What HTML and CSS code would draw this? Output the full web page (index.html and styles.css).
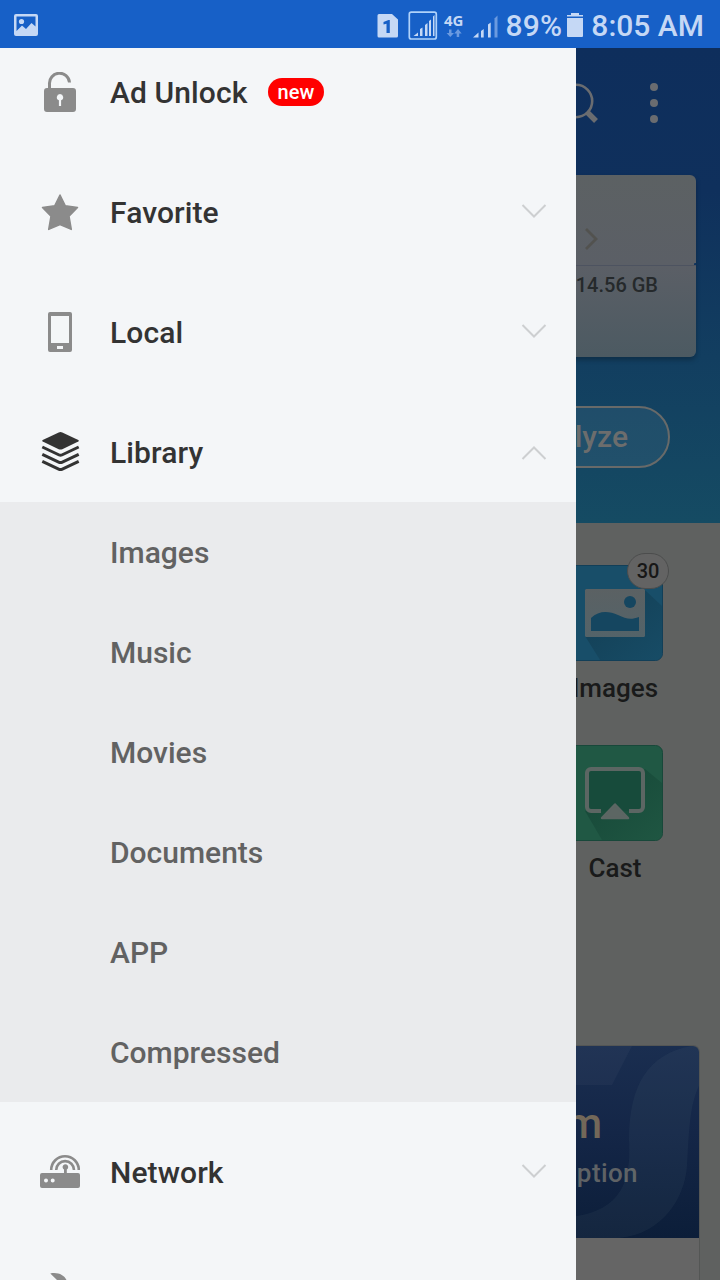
FILE: index.html
```html
<!DOCTYPE html>
<html lang="en">
<head>
    <meta charset="UTF-8">
    <meta name="viewport" content="width=device-width, initial-scale=1.0">
    <title>File Manager</title>
    <link rel="stylesheet" href="styles.css">
</head>
<body>
    <header class="status-bar">
        <svg class="status-photo" width="24" height="22" viewBox="0 0 24 22">
            <path fill-rule="evenodd" d="M2 0h20a2 2 0 0 1 2 2v18a2 2 0 0 1-2 2H2a2 2 0 0 1-2-2V2a2 2 0 0 1 2-2zM2.500 2.500V17L8 11.500l4 3.500 5.500-6 4 3.500V2.500z"/>
            <circle cx="7.500" cy="7.500" r="2.600"/>
        </svg>
        <svg class="status-icons" width="121" height="32" viewBox="0 0 121 32">
            <!-- sim card -->
            <path fill-rule="evenodd" d="M2 4h13l6 5.500V26a1.500 1.500 0 0 1-1.500 1.500H2A1.500 1.500 0 0 1 .5 26V5.500A1.500 1.500 0 0 1 2 4zM6.500 12v2.600l3-.8V23h3.300V10h-1.300z"/>
            <!-- boxed signal -->
            <rect x="32.300" y="2.200" width="27" height="26.800" rx="2" fill="none" stroke="#b0d2fa" stroke-width="1.700"/>
            <path d="M36.500 26l4.500-3.500V26zM43 19l2.500-1.500V26H43zM48 15l2.500-2v13H48zM52 11l2-1.500V26h-2zM56 6.500L57.500 5v21H56z"/>
            <text class="net-type" x="67" y="15.500">4G</text>
            <path class="dim" d="M72 19.500h2.500V23H77l-3.700 4-3.700-4H72zM79.700 27h2.500v-3.500h2.500L81 19l-3.700 4.500h2.400z"/>
            <!-- signal -->
            <path d="M96 27.500l5.500-5v5zM104 21l2.700-2v8.500H104zM111 14.500l2.700-2v15H111z"/>
            <path class="dim" d="M117.500 8.500l3-3v22h-3z"/>
        </svg>
        <span class="battery-level">89%</span>
        <svg class="battery" width="16" height="24" viewBox="0 0 16 24">
            <path d="M4 0h8v2h4v1.500H0V2h4zM0 5h16v18a1 1 0 0 1-1 1H1a1 1 0 0 1-1-1z"/>
        </svg>
        <span class="clock">8:05 AM</span>
    </header>

    <div class="screen">
        <main class="home">
            <section class="storage">
                <div class="toolbar">
                    <svg width="44" height="44" viewBox="0 0 44 44">
                        <circle cx="20" cy="20" r="16.200" fill="none" stroke="#6a6c70" stroke-width="2.600"/>
                        <path d="M31 31l9 9" stroke="#6a6c70" stroke-width="5.500"/>
                    </svg>
                    <svg width="8" height="40" viewBox="0 0 8 40">
                        <g fill="#6a6c70"><circle cx="4" cy="4" r="4"/><circle cx="4" cy="20" r="4"/><circle cx="4" cy="36" r="4"/></g>
                    </svg>
                </div>
                <div class="storage-card">
                    <div class="storage-top">
                        <svg width="14" height="24" viewBox="0 0 14 24"><path d="M2 2l10 10L2 22" fill="none" stroke="#52524f" stroke-width="2.800"/></svg>
                    </div>
                    <div class="storage-bottom">14.56 GB</div>
                </div>
                <div class="analyze">Analyze</div>
            </section>

            <section class="tiles">
                <div class="tile">
                    <div class="tile-icon">
                        <svg width="96" height="96" viewBox="0 0 96 96">
                            <defs>
                                <linearGradient id="frame" x1="0" y1="0" x2="0" y2="1"><stop offset="0" stop-color="#5b6163"/><stop offset="1" stop-color="#536369"/></linearGradient>
                                <linearGradient id="blue-shade" x1="0" y1="0" x2="1" y2="1"><stop offset=".3" stop-color="#144259"/><stop offset="1" stop-color="#174c66"/></linearGradient>
                                <linearGradient id="green-shade" x1="0" y1="0" x2="1" y2="1"><stop offset=".3" stop-color="#184b3a"/><stop offset="1" stop-color="#1f5642"/></linearGradient>
                            </defs>
                            <rect x=".5" y=".5" width="95" height="95" rx="7" fill="#184e69" stroke="#123f58"/>
                            <path d="M18 71L78 25l17 16v47a7 7 0 0 1-7 7H33z" fill="url(#blue-shade)"/>
                            <rect x="18" y="24" width="60" height="48" rx="1.500" fill="url(#frame)"/>
                            <path d="M24 53c8-8 18-7 27-3 8 4 13 5 21 2v14H24z" fill="#154660"/>
                            <circle cx="63" cy="37" r="6" fill="#154660"/>
                        </svg>
                        <span class="count">30</span>
                    </div>
                    <div class="tile-label">Images</div>
                </div>
                <div class="tile">
                    <div class="tile-icon">
                        <svg width="96" height="96" viewBox="0 0 96 96">
                            <rect x=".5" y=".5" width="95" height="95" rx="7" fill="#205844" stroke="#18483a"/>
                            <path d="M18 66L78 24l17 14v50a7 7 0 0 1-7 7H35z" fill="url(#green-shade)"/>
                            <rect x="20" y="24" width="56" height="42" rx="3" fill="#174b3b"/>
                            <path d="M34 66H24a4 4 0 0 1-4-4V28a4 4 0 0 1 4-4h48a4 4 0 0 1 4 4v34a4 4 0 0 1-4 4H62" fill="none" stroke="#5c6663" stroke-width="4"/>
                            <path d="M48 59.500L61 73H35z" fill="#5c6663" stroke="#5c6663" stroke-width="2.500" stroke-linejoin="round"/>
                        </svg>
                    </div>
                    <div class="tile-label">Cast</div>
                </div>
            </section>

            <section class="promo">
                <div class="promo-banner">
                    <svg class="promo-art" width="180" height="192" viewBox="0 0 180 192">
                        <path d="M0 0h113L93 39H0z" fill="#fff" opacity=".03"/>
                        <path d="M180 0h-8C130 8 110 38 110 94c2 36-4 72-60 77l-50 1v20h100c45-4 66-42 68-72 2-30 2-60 12-80z" fill="#7a9a9a" opacity=".07"/>
                    </svg>
                    <div class="promo-title">Premium</div>
                    <div class="promo-text">Subscription</div>
                </div>
            </section>
        </main>

        <nav class="drawer">
            <div class="menu-item">
                <svg class="menu-icon" viewBox="0 0 40 40">
                    <path d="M9.500 17v-5a10 10 0 0 1 20-1.500" fill="none" stroke="#8b8b8b" stroke-width="3"/>
                    <path fill-rule="evenodd" d="M7 16h26a3 3 0 0 1 3 3v18a3 3 0 0 1-3 3H7a3 3 0 0 1-3-3V19a3 3 0 0 1 3-3zM20 22a3.200 3.200 0 0 0-1.100 6.200V34h2.200v-5.800A3.200 3.200 0 0 0 20 22z"/>
                </svg>
                <span class="menu-label">Ad Unlock</span>
                <span class="new-badge">new</span>
            </div>
            <div class="menu-item">
                <svg class="menu-icon" viewBox="0 0 40 40">
                    <path d="M20 3l5.300 10.800L37.500 15.500l-8.500 8.700L31.300 37.400 20 32.500 8.700 37.400 11 24.200 2.500 15.500l12.200-1.700z" stroke="#8b8b8b" stroke-width="1.500" stroke-linejoin="round"/>
                </svg>
                <span class="menu-label">Favorite</span>
                <svg class="arrow" viewBox="0 0 26 14"><path d="M1.500 1L13 12.500 24.500 1"/></svg>
            </div>
            <div class="menu-item">
                <svg class="menu-icon" viewBox="0 0 40 40">
                    <path fill-rule="evenodd" d="M10 0h20a2 2 0 0 1 2 2v36a2 2 0 0 1-2 2H10a2 2 0 0 1-2-2V2a2 2 0 0 1 2-2zM11 4v27h18V4zM17 34v3h6v-3z"/>
                </svg>
                <span class="menu-label">Local</span>
                <svg class="arrow" viewBox="0 0 26 14"><path d="M1.500 1L13 12.500 24.500 1"/></svg>
            </div>
            <div class="menu-item">
                <svg class="menu-icon dark" viewBox="0 0 40 40">
                    <path d="M18.700.5q1.800-.8 3.600 0l16 7.500q1 .8 0 1.600l-16 7.600q-1.800.8-3.600 0L2.700 9.600q-1-.8 0-1.600z"/>
                    <path d="M2.300 15l16.900 8q1.300.6 2.600 0l16.900-8M2.300 22.300l16.900 8q1.300.6 2.600 0l16.900-8M2.300 29.300l16.900 8q1.300.6 2.600 0l16.900-8" fill="none" stroke="#333" stroke-width="3"/>
                </svg>
                <span class="menu-label">Library</span>
                <svg class="arrow arrow-up" viewBox="0 0 26 14"><path d="M1.500 13L13 1.500 24.500 13"/></svg>
            </div>
            <div class="submenu">
                <div class="submenu-item">Images</div>
                <div class="submenu-item">Music</div>
                <div class="submenu-item">Movies</div>
                <div class="submenu-item">Documents</div>
                <div class="submenu-item">APP</div>
                <div class="submenu-item">Compressed</div>
            </div>
            <div class="menu-item">
                <svg class="menu-icon" viewBox="0 0 40 40">
                    <path fill-rule="evenodd" d="M2 21h36a2 2 0 0 1 2 2v11a2 2 0 0 1-2 2H2a2 2 0 0 1-2-2V23a2 2 0 0 1 2-2zM6 26.500a2 2 0 1 0 0 4 2 2 0 0 0 0-4zM12.700 26.500a2 2 0 1 0 0 4 2 2 0 0 0 0-4z"/>
                    <path d="M11.200 18a13.800 13.800 0 0 1 27.600 0M16.200 18a8.900 8.900 0 0 1 17.800 0" fill="none" stroke="#8b8b8b" stroke-width="2.600"/>
                    <path d="M24 21v-3.500a2.800 2.800 0 1 1 2.800 0V21z"/>
                </svg>
                <span class="menu-label">Network</span>
                <svg class="arrow" viewBox="0 0 26 14"><path d="M1.500 1L13 12.500 24.500 1"/></svg>
            </div>
            <div class="menu-item">
                <svg class="menu-icon" viewBox="0 0 40 40">
                    <path d="M10.300 1.500C18 0 24 3 26.500 8v6H17V8z"/>
                </svg>
            </div>
        </nav>
    </div>
</body>
</html>
```
FILE: styles.css
```css
* {
    box-sizing: border-box;
}

body {
    margin: 0;
    height: 1280px;
    overflow: hidden;
    font-family: Roboto, sans-serif;
    font-weight: 500;
    background-color: #5f6160;
}

svg {
    display: block;
    flex-shrink: 0;
}

/* Status bar */
.status-bar {
    display: flex;
    align-items: center;
    height: 48px;
    padding: 2px 16px 0 14px;
    background-color: #1760c7;
    color: #c5d8f5;
    fill: #c5d8f5;
    font-size: 30px;
}

.status-icons {
    margin-left: auto;
    margin-top: 1px;
}

.dim {
    fill: #6b9ae0;
}

.net-type {
    font-family: "Noto Sans", sans-serif;
    font-size: 15px;
    font-weight: 700;
}

.battery-level {
    margin-left: 8px;
    letter-spacing: 0.2px;
}

.battery {
    margin: 0 8px 0 5px;
}

.clock {
    white-space: nowrap;
}

.screen {
    position: relative;
    height: 1232px;
    overflow: hidden;
}

/* Home page behind the drawer */
.storage {
    display: flex;
    flex-direction: column;
    height: 475px;
    background: linear-gradient(#0e2e5c 0%, #0f305c 30%, #123e60 65%, #154b63 100%);
}

.toolbar {
    display: flex;
    justify-content: flex-end;
    align-items: center;
    gap: 50px;
    height: 110px;
    padding-right: 62px;
}

.storage-card {
    height: 182px;
    margin: 17px 24px 0;
    border-radius: 6px;
    background: linear-gradient(#5c6163, #5b5f66 50%, #4c5a62);
    box-shadow: 0 3px 5px rgba(0, 0, 0, 0.25);
}

.storage-top {
    display: flex;
    justify-content: flex-end;
    height: 91px;
    padding: 52px 98px 0 0;
    border-bottom: 1px solid #4d5360;
    /* small notch where the two halves meet */
    background: radial-gradient(circle at 100% 100%, #10345e 2px, transparent 2.5px);
}

.storage-bottom {
    padding: 7px 38px 0 0;
    color: #25292b;
    font-size: 20px;
    line-height: 24px;
    text-align: right;
}

.analyze {
    height: 62px;
    margin: 49px 50px 0;
    padding-right: 40px;
    border: 2px solid #686a69;
    border-radius: 31px;
    background-color: rgba(255, 255, 255, 0.06);
    color: #6c6d6d;
    font-size: 30px;
    line-height: 58px;
    text-align: right;
}

.tiles {
    display: flex;
    flex-direction: column;
    align-items: flex-end;
    gap: 34px;
    height: 522px;
    padding: 42px 45px 0 0;
}

.tile {
    display: flex;
    flex-direction: column;
    align-items: center;
    width: 120px;
    height: 146px;
}

.tile-icon {
    position: relative;
}

.tile-label {
    margin-top: 11px;
    color: #191a1a;
    font-size: 26px;
    line-height: 32px;
}

/* Number over the corner of a tile */
.count {
    position: absolute;
    top: -12px;
    right: -6px;
    width: 42px;
    height: 36px;
    border: 1px solid #4c4d4d;
    border-radius: 18px;
    background-color: #636363;
    color: #171717;
    font-size: 20px;
    line-height: 35px;
    text-align: center;
}

.promo {
    height: 240px;
    margin: 0 20px 0 21px;
    border: 1px solid #545655;
    border-bottom: none;
    border-radius: 7px 7px 0 0;
    background-color: #656565;
    overflow: hidden;
}

.promo-banner {
    position: relative;
    height: 192px;
    padding-top: 53px;
    background: linear-gradient(#1a2e50, #142647 45%, #0c1e39);
    text-align: right;
}

.promo-art {
    position: absolute;
    top: 0;
    right: 0;
}

.promo-title {
    padding-right: 97px;
    color: #736859;
    font-size: 42px;
    line-height: 50px;
}

.promo-text {
    margin-top: 7px;
    padding-right: 61px;
    color: #5f6265;
    font-size: 26px;
    letter-spacing: 0.4px;
    line-height: 34px;
}

/* Drawer */
.drawer {
    position: absolute;
    top: 0;
    left: 0;
    width: 576px;
    height: 1232px;
    overflow: hidden;
    background-color: #f4f6f8;
}

.menu-item {
    display: flex;
    align-items: center;
    height: 100px;
    margin-top: 20px;
    padding: 0 29px 0 40px;
}

.menu-item:first-child {
    margin-top: -6px;
}

.menu-icon {
    width: 40px;
    height: 40px;
    margin-right: 30px;
    fill: #8b8b8b;
}

.menu-icon.dark {
    fill: #333;
}

.menu-label {
    color: #333;
    font-size: 30px;
    letter-spacing: 0.1px;
}

.new-badge {
    width: 56px;
    height: 28px;
    margin-left: 20.5px;
    border-radius: 14px;
    background-color: #f00;
    color: #fff;
    font-size: 20px;
    line-height: 28px;
    text-align: center;
}

.arrow {
    width: 26px;
    height: 14px;
    margin-left: auto;
    margin-bottom: 2px;
    fill: none;
    stroke: #cdcfd1;
    stroke-width: 2;
}

.arrow-up {
    margin: 2px 0 0 auto;
}

.submenu {
    background-color: #eaebed;
}

.submenu-item {
    height: 100px;
    padding-left: 110px;
    color: #626262;
    font-size: 30px;
    line-height: 102px;
}
```
